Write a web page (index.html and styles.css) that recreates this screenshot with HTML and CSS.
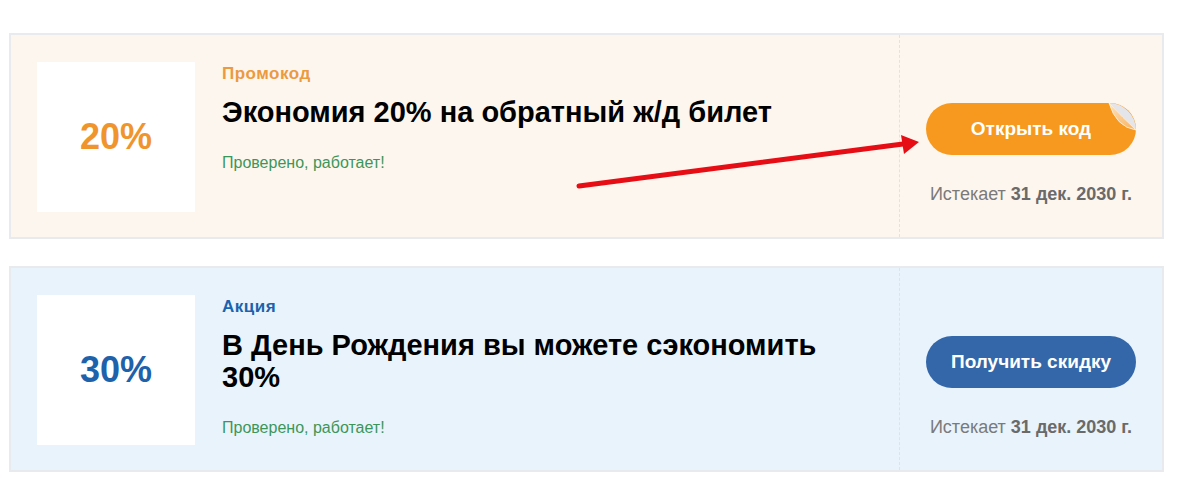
FILE: index.html
```html
<!DOCTYPE html>
<html lang="ru">
<head>
  <meta charset="UTF-8">
  <meta name="viewport" content="width=device-width, initial-scale=1.0">
  <title>Промокоды</title>
  <link rel="stylesheet" href="styles.css">
</head>
<body>
  <div class="list">
    <div class="coupon coupon-promo">
      <div class="coupon-main">
        <div class="coupon-logo">20%</div>
        <div class="coupon-info">
          <div class="coupon-type">Промокод</div>
          <div class="coupon-title">Экономия 20% на обратный ж/д билет</div>
          <div class="coupon-check">Проверено, работает!</div>
        </div>
      </div>
      <div class="coupon-side">
        <button class="btn btn-code">Открыть код
          <!-- corner curl -->
          <svg class="peel" width="28" height="28" viewBox="0 0 28 28">
            <defs>
              <linearGradient id="flap" x1="0" y1="0" x2="1" y2="1">
                <stop offset="0" stop-color="#fde1bc"/>
                <stop offset="1" stop-color="#f9b25e"/>
              </linearGradient>
            </defs>
            <path d="M1 0 A27 27 0 0 1 28 27 Q15 15 1 0 Z" fill="#e3e5ea"/>
            <path d="M1 0 Q15 15 28 27 Q8 24 1 0 Z" fill="url(#flap)" stroke="#fff6ea" stroke-width="0.8"/>
          </svg>
        </button>
        <p class="expires">Истекает <b>31 дек. 2030 г.</b></p>
      </div>
    </div>

    <div class="coupon coupon-sale">
      <div class="coupon-main">
        <div class="coupon-logo">30%</div>
        <div class="coupon-info">
          <div class="coupon-type">Акция</div>
          <div class="coupon-title">В День Рождения вы можете сэкономить 30%</div>
          <div class="coupon-check">Проверено, работает!</div>
        </div>
      </div>
      <div class="coupon-side">
        <button class="btn btn-deal">Получить скидку</button>
        <p class="expires">Истекает <b>31 дек. 2030 г.</b></p>
      </div>
    </div>

    <!-- red pointer to the code button -->
    <svg class="pointer" width="1180" height="490" viewBox="0 0 1180 490">
      <line x1="579" y1="186" x2="903" y2="144" stroke="#e60d14" stroke-width="5" stroke-linecap="round"/>
      <polygon points="919,142 901,135 904,154" fill="#e60d14"/>
    </svg>
  </div>
</body>
</html>
```

FILE: styles.css
```css
body {
  margin: 0;
  padding: 0;
  background: #fff;
  font-family: "Liberation Sans", Arial, sans-serif;
  color: #000;
}

.list {
  position: relative;
  padding: 33px 16px 0 9px;
  display: flex;
  flex-direction: column;
  gap: 27px;
}

.coupon {
  display: flex;
  border: 2px solid #e9eaee;
  height: 202px;
}

.coupon-promo {
  background: #fdf6ee;
}

.coupon-sale {
  background: #e9f3fb;
}

.coupon-main {
  flex: 1;
  display: flex;
  padding: 27px 40px 25px 26px;
}

.coupon-logo {
  width: 158px;
  height: 150px;
  flex-shrink: 0;
  background: #fff;
  display: flex;
  align-items: center;
  justify-content: center;
  font-size: 36px;
  font-weight: bold;
}

.coupon-promo .coupon-logo { color: #f0952d; }
.coupon-sale .coupon-logo { color: #1d62ab; }

.coupon-info {
  margin-left: 27px;
}

.coupon-type {
  font-size: 17px;
  font-weight: bold;
  letter-spacing: 0.5px;
  line-height: 18px;
  margin-top: 3px;
}

.coupon-promo .coupon-type { color: #eb9a40; }
.coupon-sale .coupon-type { color: #1a63ae; }

.coupon-title {
  font-size: 29px;
  font-weight: bold;
  line-height: 32px;
  margin-top: 13px;
}

.coupon-check {
  font-size: 16px;
  line-height: 18px;
  color: #3d9659;
  margin-top: 26px;
}

.coupon-side {
  width: 262px;
  border-left: 1px dashed #e2e2e6;
  padding-top: 68px;
  display: flex;
  flex-direction: column;
  align-items: center;
}

.btn {
  position: relative;
  width: 210px;
  height: 52px;
  border: none;
  border-radius: 26px;
  color: #fff;
  font-family: inherit;
  font-size: 19px;
  font-weight: bold;
  cursor: pointer;
  padding: 0;
}

.btn-code {
  background: #f7991e;
}

.btn-deal {
  background: #3467a9;
}

.peel {
  position: absolute;
  top: 0;
  right: 0;
}

.expires {
  margin: 29px 0 0;
  font-size: 18px;
  line-height: 21px;
  color: #7a7a7a;
}

.expires b {
  color: #6a6a6a;
}

.pointer {
  position: absolute;
  left: 0;
  top: 0;
  pointer-events: none;
}
```
